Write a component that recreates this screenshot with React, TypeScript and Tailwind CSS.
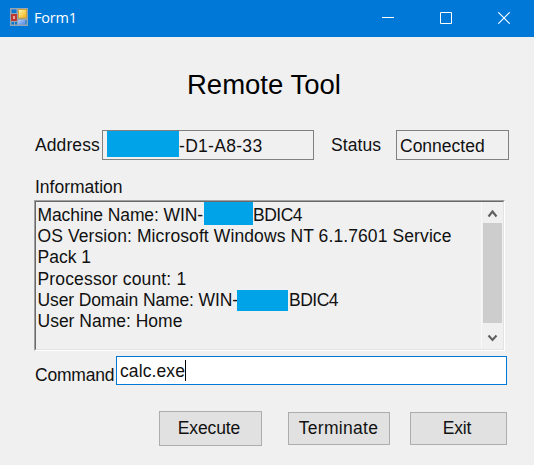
import React from "react";

function Redaction({ className }: { className: string }) {
  return <span className={"block shrink-0 bg-[#00a2e8] " + className} />;
}

function FormIcon() {
  return (
    <svg width="18" height="18" viewBox="0 0 18 18" className="shrink-0">
      <defs>
        <linearGradient id="gold" x1="0" y1="0" x2="1" y2="1">
          <stop offset="0" stopColor="#fff3ac" />
          <stop offset="0.5" stopColor="#fbd45a" />
          <stop offset="1" stopColor="#eeb321" />
        </linearGradient>
        <linearGradient id="sky" x1="0" y1="0" x2="1" y2="1">
          <stop offset="0" stopColor="#b5cdf8" />
          <stop offset="1" stopColor="#5388e8" />
        </linearGradient>
      </defs>
      <rect width="18" height="18" fill="#93a5b5" />
      <rect x="1.5" y="1.5" width="5" height="3.5" fill="#0878d0" />
      <rect x="1.5" y="14" width="2.5" height="2.5" fill="#0878d0" />
      <rect x="5" y="14" width="2" height="2.5" fill="#0878d0" />
      <rect x="15.5" y="12" width="1" height="4.5" fill="#0878d0" />
      <rect x="1" y="6" width="6" height="7" fill="#b93830" />
      <rect x="3" y="8" width="2" height="3" fill="#eca298" />
      <rect x="8" y="1" width="9" height="9.5" fill="#cda23c" />
      <rect x="9" y="2" width="7" height="7.5" fill="url(#gold)" />
      <rect x="8" y="12" width="7" height="4.5" fill="url(#sky)" />
    </svg>
  );
}

function TitleBar() {
  return (
    <header className="flex h-[37px] shrink-0 bg-[#0078d7] text-white">
      <div className="flex items-start gap-[6px] pl-[10px] pt-2">
        <FormIcon />
        <span className="font-['Open_Sans','Noto_Sans',sans-serif] text-[14.5px] leading-[20px] tracking-[-0.2px]">Form1</span>
      </div>
      <div className="ml-auto flex gap-[46px] pr-6 pt-3">
        <svg width="12" height="12"><path d="M0 5.5H12" stroke="#fff" /></svg>
        <svg width="12" height="12"><path d="M.5.5h11v11H.5z" fill="none" stroke="#fff" /></svg>
        <svg width="12" height="12"><path d="M.3.3 11.7 11.7M11.7.3.3 11.7" stroke="#fff" strokeWidth="1.1" /></svg>
      </div>
    </header>
  );
}

function ScrollBar() {
  return (
    <div className="flex w-[22px] shrink-0 flex-col items-center border-l border-[#f8f8f8] bg-[#f0f0f0]">
      <svg width="20" height="21"><path d="M5.5 14.5 9.5 9.5l4 5" fill="none" stroke="#606060" strokeWidth="2.1" /></svg>
      <div className="h-[100px] w-[19px] bg-[#cdcdcd]" />
      <svg width="20" height="24"><path d="M5.5 12.5 9.5 17l4-4.5" fill="none" stroke="#606060" strokeWidth="2.1" /></svg>
    </div>
  );
}

export default function App() {
  return (
    <main className="flex h-[465px] w-[534px] flex-col overflow-hidden whitespace-pre bg-[#f0f0f0] font-['Liberation_Sans',Arial,sans-serif] text-[17.5px] leading-[21px] text-[#111]">
      <TitleBar />
      <h1 className="mt-[31px] h-[34px] shrink-0 pl-[187px] text-[27.5px] leading-[34px] text-black">Remote Tool</h1>

      <div className="mt-[28px] flex h-[30px] shrink-0 pl-[35px]">
        <span className="w-[67px] shrink-0 pt-[5px] tracking-[0.1px]">Address</span>
        <div className="flex h-[30px] w-[212px] border border-[#808080] pl-1">
          <Redaction className="h-[26px] w-[72px]" />
          <span className="pt-[5px] tracking-[0.3px]">-D1-A8-33</span>
        </div>
        <span className="w-[82px] shrink-0 pl-[17px] pt-[5px] tracking-[0.1px]">Status</span>
        <div className="h-[30px] w-[113px] border border-[#808080] pl-[3px] pt-[5px]">Connected</div>
      </div>

      <div className="mt-[17px] h-[23px] shrink-0 pl-[35px]">Information</div>

      <div className="ml-[34px] h-[151px] w-[471px] shrink-0 border border-b-white border-l-[#a0a0a0] border-r-white border-t-[#a0a0a0]">
        <div className="flex h-[149px] border border-b-[#e3e3e3] border-l-[#696969] border-r-[#e3e3e3] border-t-[#696969]">
          <div className="min-w-0 grow pl-[1.5px] leading-[21.3px]">
            <div className="flex h-[24px]">
              <span className="w-[166.5px] shrink-0 pt-[3px] tracking-[-0.1px]">Machine Name: WIN-</span>
              <Redaction className="h-[23px] w-[49px]" />
              <span className="pt-[3px] tracking-[-0.5px]">BDIC4</span>
            </div>
            <div className="tracking-[0.1px]">OS Version: Microsoft Windows NT 6.1.7601 Service</div>
            <div>Pack 1</div>
            <div className="tracking-[0.16px]">Processor count: 1</div>
            <div className="flex">
              <span className="w-[199.5px] shrink-0 tracking-[-0.13px]">User Domain Name: WIN-</span>
              <Redaction className="h-[21px] w-[51px]" />
              <span className="pl-px tracking-[-0.5px]">BDIC4</span>
            </div>
            <div>User Name: Home</div>
          </div>
          <ScrollBar />
        </div>
      </div>

      <div className="mt-[5px] flex h-[29px] shrink-0 pl-[35px]">
        <span className="w-[81px] shrink-0 pt-[9px] tracking-[-0.2px]">Command</span>
        <div className="flex h-[29px] w-[391px] border border-[#0078d7] bg-white pl-[3px] pt-[3px]">
          <span className="pt-px tracking-[0.1px]">calc.exe</span>
          <span className="h-[21px] w-px bg-black" />
        </div>
      </div>

      <div className="mt-[26px] flex shrink-0 pl-[159px]">
        <button className="h-[35px] w-[103px] border border-[#adadad] bg-[#e1e1e1] pr-[3px] tracking-[-0.1px]">Execute</button>
        <button className="ml-[26px] mt-px h-[33px] w-[102px] border border-[#adadad] bg-[#e1e1e1] pr-px tracking-[0.3px]">Terminate</button>
        <button className="ml-[20px] mt-px h-[33px] w-[97px] border border-[#adadad] bg-[#e1e1e1] pr-[3px] tracking-[-0.2px]">Exit</button>
      </div>
    </main>
  );
}
